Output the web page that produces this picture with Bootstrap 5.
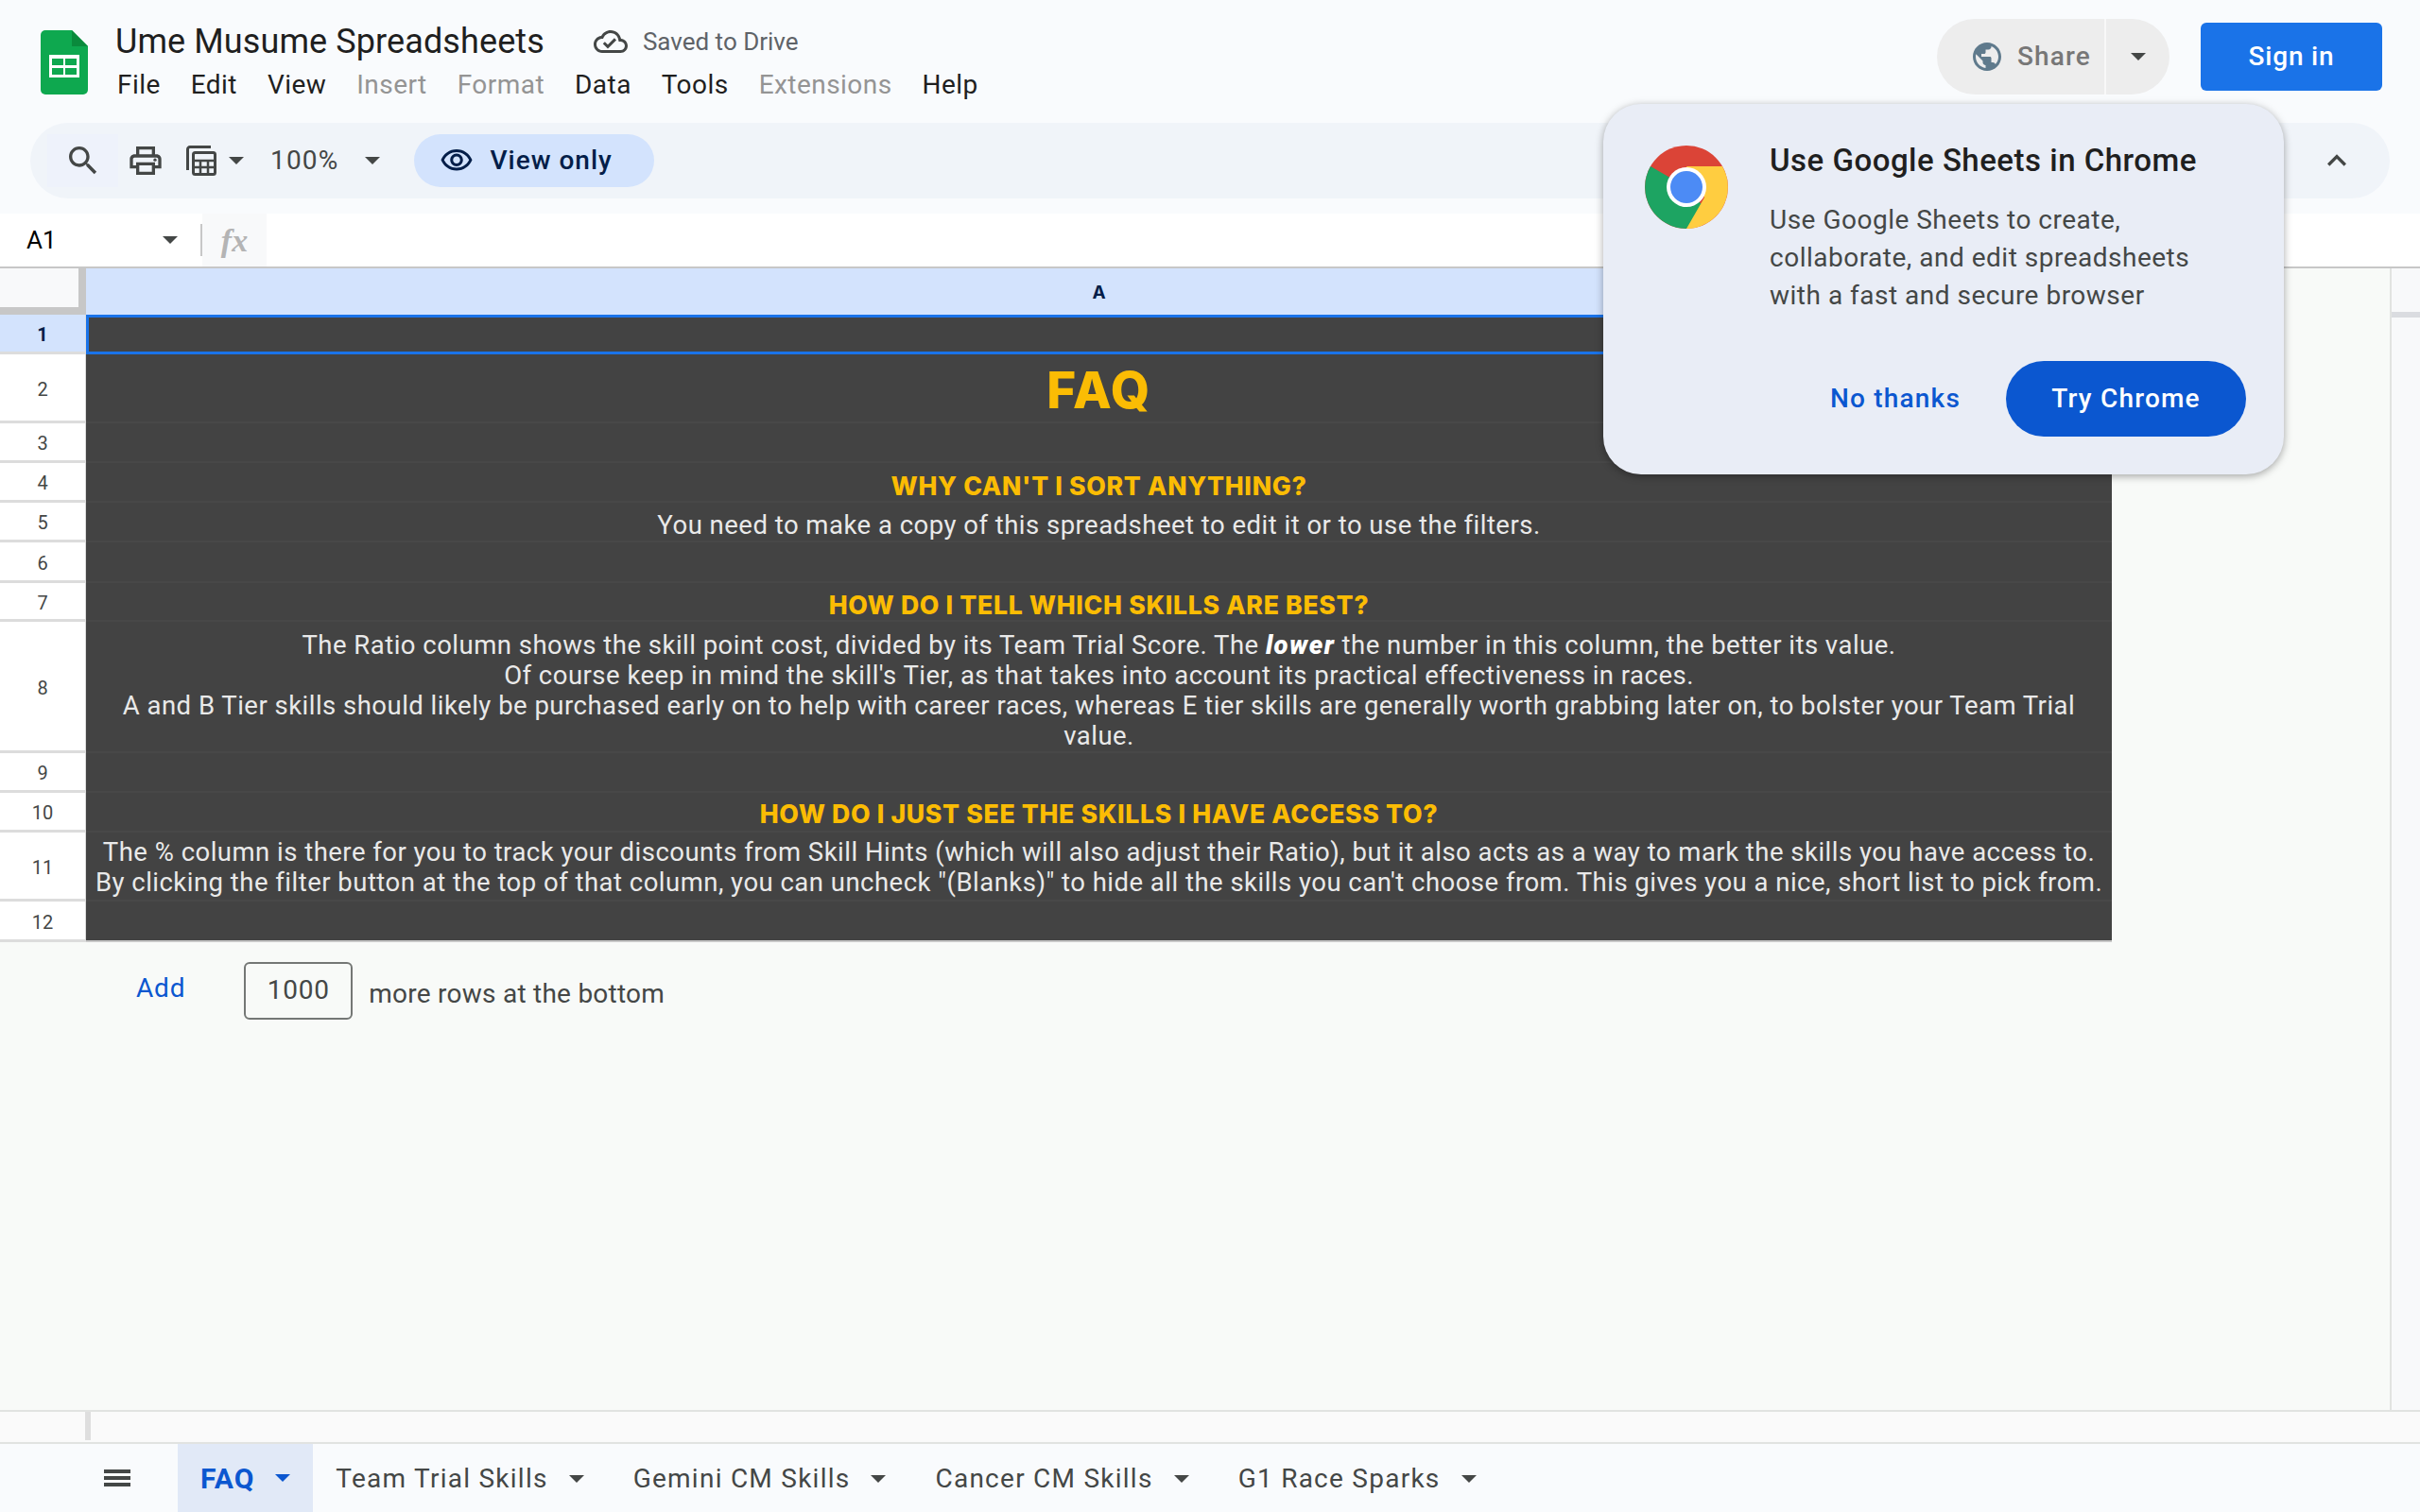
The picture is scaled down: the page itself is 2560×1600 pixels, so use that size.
<!DOCTYPE html>
<html lang="en">
<head>
  <meta charset="UTF-8">
  <title>Ume Musume Spreadsheets</title>
  <link href="https://cdn.jsdelivr.net/npm/bootstrap@5.3.0/dist/css/bootstrap.min.css" rel="stylesheet">
  <style>
    html, body { height: 100%; }
    body {
      font-family: Roboto, "Liberation Sans", sans-serif;
      background-color: #f8faf8;
      color: #444746;
      overflow: hidden;
    }
    .page { height: 1600px; position: relative; }
    .top-area { background-color: #f9fbfd; height: 226px; flex: none; }
    .title-bar { height: 130px; padding-left: 43px; padding-right: 40px; }
    .sheets-logo { width: 50px; height: 68px; margin-top: 32px; flex: none; }
    .doc-block { margin-left: 29px; padding-top: 21px; }
    .doc-title { font-size: 36px; line-height: 46px; color: #1f1f1f; letter-spacing: .1px; }
    .saved-box { margin-left: 52px; font-size: 26px; color: #5f6368; gap: 16px; }
    .menu-row { gap: 32px; font-size: 28px; line-height: 36px; margin-left: 2px; margin-top: 5px; color: #1f1f1f; letter-spacing: .45px; }
    .menu-off { color: #949494; }
    .share-group { height: 80px; width: 246px; margin-top: 20px; margin-left: auto; background-color: #ededed; border-radius: 40px; color: #777; font-size: 28px; font-weight: 500; letter-spacing: 1.1px; }
    .share-main { width: 179px; padding-left: 35px; gap: 14px; border-right: 2px solid #f8f8f8; height: 100%; }
    .share-drop { flex: 1; }
    .signin-btn { width: 192px; height: 72px; margin-top: 24px; margin-left: 33px; background-color: #1a73e8; border: 0; border-radius: 6px; color: #fff; font-size: 28px; font-weight: 500; letter-spacing: .8px; }
    .tool-bar { height: 80px; margin: 0 32px 0 32px; background-color: #f0f4f9; border-radius: 40px; padding-left: 18px; padding-right: 36px; }
    .tool-hover { width: 75px; height: 56px; background-color: #eef2fb; }
    .print-icon { margin-left: 9px; }
    .calc-icon { margin-left: 23px; }
    .calc-tri { margin-left: 13px; }
    .zoom-text { font-size: 28px; color: #444746; letter-spacing: 1.2px; margin-left: 28px; }
    .zoom-tri { margin-left: 27px; }
    .view-pill { width: 254px; height: 56px; margin-left: 36px; background-color: #d3e3fd; border-radius: 28px; color: #041e49; font-size: 28px; font-weight: 500; padding-left: 27px; gap: 18px; letter-spacing: 1px; }
    .tri { width: 0; height: 0; border-left: 8px solid transparent; border-right: 8px solid transparent; border-top: 8px solid #444746; display: inline-block; flex: none; }
    .tri-blue { border-top-color: #0b57d0; }
    .formula-bar { height: 58px; background-color: #fff; border-bottom: 2px solid #c7c7c7; flex: none; }
    .name-box { width: 212px; padding-left: 28px; padding-right: 24px; font-size: 26px; color: #000; }
    .fx-sep { width: 2px; height: 34px; background-color: #c7c7c7; flex: none; }
    .fx-box { width: 68px; background-color: #f8f9fa; color: #b4b4b4; font-family: "Liberation Serif", serif; font-style: italic; font-weight: 700; font-size: 34px; }
    .sheet-wrap { flex: 1; min-height: 0; }
    .sheet-main { width: 2528px; flex: none; }
    .corner-box { width: 91px; height: 49px; background-color: #f8f9fa; border-right: 8px solid #c7c7c7; border-bottom: 8px solid #c7c7c7; flex: none; }
    .col-a { width: 2143px; height: 49px; background-color: #d3e3fd; color: #041e49; font-family: Inter, Roboto, sans-serif; font-weight: 700; font-size: 19px; padding-top: 4px; }
    .row-num { width: 91px; padding-top: 3px; background-color: #fff; border-bottom: 3px solid #dcdcdc; border-right: 1px solid #dcdcdc; font-size: 20px; color: #444746; flex: none; }
    .row-num-on { background-color: #d3e3fd; color: #041e49; font-weight: 700; }
    .sheet-cell { width: 2143px; background-color: #434343; border-bottom: 2px solid #484848; color: #e9e9e9; font-size: 27.5px; line-height: 32px; text-align: center; padding: 0 4px; letter-spacing: .48px; }
    .sheet-cell b { font-weight: 900; letter-spacing: 1.4px; color: #fff; }
    .cell-head { color: #fbbc04; font-family: Inter, Roboto, sans-serif; font-weight: 800; font-size: 26.67px; letter-spacing: .65px; }
    .cell-big { color: #fbbc04; font-family: Inter, Roboto, sans-serif; font-weight: 800; font-size: 53px; line-height: 70px; padding-top: 3px; letter-spacing: 1.5px; }
    .cell-lift { padding-bottom: 2px; }
    .cell-pick { border: solid #1a73e8; border-width: 3px 0 3px 3px; height: 42px; }
    .cell-end { border-bottom: 2px solid #c7c7c7; }
    .add-rows { padding-left: 144px; padding-top: 21px; font-size: 28px; letter-spacing: .25px; }
    .add-link { color: #0b57d0; margin-top: 7px; letter-spacing: .8px; }
    .add-input { width: 115px; height: 61px; margin-left: 62px; padding-bottom: 2px; border: 2px solid #747775; border-radius: 6px; letter-spacing: .8px; }
    .add-label { margin-left: 17px; margin-top: 13px; }
    .v-scroll { flex: 1; background-color: #f8f9fa; border-left: 2px solid #e1e3e1; height: 100%; }
    .v-thumb { height: 6px; margin-top: 46px; background-color: #dadce0; }
    .h-scroll { height: 36px; flex: none; background-color: #fafafa; border-top: 2px solid #e1e3e1; border-bottom: 2px solid #e1e3e1; padding-left: 90px; }
    .h-mark { width: 6px; height: 30px; background-color: #dedede; }
    .tab-bar { height: 72px; flex: none; background-color: #f9fbfd; font-size: 28px; padding-left: 110px; letter-spacing: 1.25px; }
    .tab-menu { width: 28px; margin-right: 50px; height: 18px; border-top: 4px solid #444746; border-bottom: 4px solid #444746; position: relative; }
    .tab-menu::after { content: ""; position: absolute; left: 0; right: 0; top: 3px; height: 4px; background-color: #444746; }
    .tab-item { gap: 22px; padding: 1px 26px 0; height: 100%; }
    .tab-on { background-color: #e1e9f7; color: #0b57d0; font-weight: 700; font-size: 30px; letter-spacing: 1px; padding: 0 24px 0; margin-right: -2px; }
    .chrome-pop { position: absolute; left: 1696px; top: 110px; width: 720px; height: 392px; background-color: #e9edf6; border-radius: 40px; box-shadow: 0 2px 8px rgba(0,0,0,.35); z-index: 5; padding: 43px 40px 0 43px; }
    .chrome-logo { width: 90px; height: 90px; flex: none; }
    .pop-text { margin-left: 43px; margin-top: -5px; }
    .pop-title { font-size: 33px; line-height: 44px; font-weight: 500; color: #1f1f1f; letter-spacing: .5px; }
    .pop-body { font-size: 28px; line-height: 40px; color: #444746; margin-top: 21px; letter-spacing: .5px; }
    .pop-actions { margin-top: 49px; gap: 48px; }
    .pop-no { color: #0b57d0; font-size: 28px; font-weight: 500; letter-spacing: 1.2px; }
    .pop-try { width: 254px; height: 80px; border: 0; background-color: #0b57d0; color: #fff; border-radius: 40px; font-size: 28px; font-weight: 500; letter-spacing: 1.2px; }
  </style>
</head>
<body>
<div class="page d-flex flex-column">

  <div class="top-area">
    <div class="title-bar d-flex">
      <svg class="sheets-logo" viewBox="0 0 50 68">
        <path d="M5 0h28l17 17v46a5 5 0 0 1-5 5H5a5 5 0 0 1-5-5V5a5 5 0 0 1 5-5z" fill="#0ea84f"/>
        <path d="M33 0l17 17H33z" fill="#0a8a3c"/>
        <path d="M9 26h32v24H9z" fill="#fff"/>
        <path d="M12 30h12v7H12zM26 30h12v7H26zM12 40h12v7H12zM26 40h12v7H26z" fill="#0ea84f"/>
      </svg>
      <div class="doc-block">
        <div class="d-flex align-items-center">
          <div class="doc-title">Ume Musume Spreadsheets</div>
          <div class="saved-box d-flex align-items-center">
            <svg width="36" height="36" viewBox="0 0 24 24" fill="#444746"><path d="M19.35 10.04C18.67 6.59 15.64 4 12 4 9.11 4 6.6 5.64 5.35 8.04 2.34 8.36 0 10.91 0 14c0 3.31 2.69 6 6 6h13c2.76 0 5-2.24 5-5 0-2.64-2.05-4.78-4.65-4.96zM19 18H6c-2.21 0-4-1.79-4-4 0-2.05 1.53-3.76 3.56-3.97l1.07-.11.5-.95C8.08 7.14 9.94 6 12 6c2.62 0 4.88 1.86 5.39 4.43l.3 1.5 1.53.11c1.56.1 2.78 1.41 2.78 2.96 0 1.65-1.35 3-3 3zm-9-3.82l-2.09-2.09L6.5 13.5 10 17l6.01-6.01-1.41-1.41z"/></svg>
            <span>Saved to Drive</span>
          </div>
        </div>
        <div class="menu-row d-flex">
          <span>File</span><span>Edit</span><span>View</span><span class="menu-off">Insert</span><span class="menu-off">Format</span><span>Data</span><span>Tools</span><span class="menu-off">Extensions</span><span>Help</span>
        </div>
      </div>
      <div class="share-group d-flex align-items-center">
        <div class="share-main d-flex align-items-center">
          <svg width="36" height="36" viewBox="0 0 24 24" fill="#5f7a8c"><path d="M12 2C6.48 2 2 6.48 2 12s4.48 10 10 10 10-4.48 10-10S17.52 2 12 2zm-1 17.93c-3.95-.49-7-3.85-7-7.93 0-.62.08-1.21.21-1.79L9 15v1c0 1.1.9 2 2 2v1.93zm6.9-2.54c-.26-.81-1-1.39-1.9-1.39h-1v-3c0-.55-.45-1-1-1H8v-2h2c.55 0 1-.45 1-1V7h2c1.1 0 2-.9 2-2v-.41c2.93 1.19 5 4.06 5 7.41 0 2.08-.8 3.97-2.1 5.39z"/></svg>
          <span>Share</span>
        </div>
        <div class="share-drop d-flex justify-content-center"><span class="tri"></span></div>
      </div>
      <button class="signin-btn">Sign in</button>
    </div>
    <div class="tool-bar d-flex align-items-center">
      <div class="tool-hover d-flex align-items-center justify-content-center">
        <svg width="40" height="40" viewBox="0 0 24 24" fill="#444746"><path d="M15.5 14h-.79l-.28-.27C15.41 12.59 16 11.11 16 9.5 16 5.91 13.09 3 9.5 3S3 5.91 3 9.5 5.91 16 9.5 16c1.61 0 3.09-.59 4.23-1.57l.27.28v.79l5 4.99L20.49 19l-4.99-5zm-6 0C7.01 14 5 11.99 5 9.5S7.01 5 9.5 5 14 7.01 14 9.5 11.99 14 9.5 14z"/></svg>
      </div>
      <svg class="print-icon" width="40" height="40" viewBox="0 0 24 24" fill="#444746"><path d="M19 8h-1V3H6v5H5c-1.66 0-3 1.34-3 3v6h4v4h12v-4h4v-6c0-1.66-1.34-3-3-3zM8 5h8v3H8V5zm8 14H8v-4h8v4zm2-4v-2H6v2H4v-4c0-.55.45-1 1-1h14c.55 0 1 .45 1 1v4h-2z"/><circle cx="18" cy="11.5" r="1"/></svg>
      <svg class="calc-icon" width="32" height="32" viewBox="0 0 32 32" fill="none" stroke="#444746" stroke-width="3">
        <path d="M26 1.500H4A2.500 2.500 0 0 0 1.500 4v22"/>
        <rect x="7.500" y="7.500" width="23" height="23" rx="2"/>
        <path stroke-width="2.500" d="M7.500 16h23M7.500 23h23M15 16v14M23 16v14"/>
      </svg>
      <span class="tri calc-tri"></span>
      <span class="zoom-text">100%</span>
      <span class="tri zoom-tri"></span>
      <div class="view-pill d-flex align-items-center">
        <svg width="36" height="36" viewBox="0 0 24 24" fill="#041e49"><path d="M12 6c3.790 0 7.170 2.130 8.820 5.500C19.170 14.870 15.790 17 12 17s-7.170-2.130-8.820-5.500C4.830 8.130 8.210 6 12 6m0-2C7 4 2.730 7.110 1 11.500 2.730 15.890 7 19 12 19s9.270-3.110 11-7.500C21.270 7.110 17 4 12 4zm0 5c1.380 0 2.500 1.120 2.500 2.500S13.380 14 12 14s-2.500-1.120-2.500-2.500S10.620 9 12 9m0-2c-2.480 0-4.500 2.020-4.500 4.500S9.520 16 12 16s4.500-2.020 4.500-4.500S14.480 7 12 7z"/></svg>
        <span>View only</span>
      </div>
      <svg class="ms-auto" width="40" height="40" viewBox="0 0 24 24" fill="#444746"><path d="M7.410 15.410L12 10.830l4.590 4.580L18 14l-6-6-6 6z"/></svg>
    </div>
  </div>

  <div class="formula-bar d-flex align-items-stretch">
    <div class="name-box d-flex align-items-center justify-content-between"><span>A1</span><span class="tri"></span></div>
    <div class="fx-sep align-self-center"></div>
    <div class="fx-box d-flex align-items-center justify-content-center">fx</div>
  </div>

  <div class="sheet-wrap d-flex">
    <div class="sheet-main">
      <div class="d-flex">
        <div class="corner-box"></div>
        <div class="col-a d-flex align-items-center justify-content-center">A</div>
      </div>
      <div class="d-flex" style="height:42px"><div class="row-num row-num-on d-flex align-items-center justify-content-center">1</div><div class="sheet-cell cell-pick"></div></div>
      <div class="d-flex" style="height:73px"><div class="row-num d-flex align-items-center justify-content-center">2</div><div class="sheet-cell cell-big">FAQ</div></div>
      <div class="d-flex" style="height:42px"><div class="row-num d-flex align-items-center justify-content-center">3</div><div class="sheet-cell"></div></div>
      <div class="d-flex" style="height:42px"><div class="row-num d-flex align-items-center justify-content-center">4</div><div class="sheet-cell cell-head d-flex align-items-end justify-content-center">WHY CAN'T I SORT ANYTHING?</div></div>
      <div class="d-flex" style="height:42px"><div class="row-num d-flex align-items-center justify-content-center">5</div><div class="sheet-cell d-flex align-items-end justify-content-center">You need to make a copy of this spreadsheet to edit it or to use the filters.</div></div>
      <div class="d-flex" style="height:43px"><div class="row-num d-flex align-items-center justify-content-center">6</div><div class="sheet-cell"></div></div>
      <div class="d-flex" style="height:41px"><div class="row-num d-flex align-items-center justify-content-center">7</div><div class="sheet-cell cell-head d-flex align-items-end justify-content-center">HOW DO I TELL WHICH SKILLS ARE BEST?</div></div>
      <div class="d-flex" style="height:139px"><div class="row-num d-flex align-items-center justify-content-center">8</div><div class="sheet-cell d-flex align-items-end justify-content-center"><div>The Ratio column shows the skill point cost, divided by its Team Trial Score. The <b><i>lower</i></b> the number in this column, the better its value.<br>Of course keep in mind the skill's Tier, as that takes into account its practical effectiveness in races.<br>A and B Tier skills should likely be purchased early on to help with career races, whereas E tier skills are generally worth grabbing later on, to bolster your Team Trial value.</div></div></div>
      <div class="d-flex" style="height:42px"><div class="row-num d-flex align-items-center justify-content-center">9</div><div class="sheet-cell"></div></div>
      <div class="d-flex" style="height:42px"><div class="row-num d-flex align-items-center justify-content-center">10</div><div class="sheet-cell cell-head cell-lift d-flex align-items-end justify-content-center">HOW DO I JUST SEE THE SKILLS I HAVE ACCESS TO?</div></div>
      <div class="d-flex" style="height:73px"><div class="row-num d-flex align-items-center justify-content-center">11</div><div class="sheet-cell cell-lift d-flex align-items-end justify-content-center"><div>The % column is there for you to track your discounts from Skill Hints (which will also adjust their Ratio), but it also acts as a way to mark the skills you have access to.<br>By clicking the filter button at the top of that column, you can uncheck "(Blanks)" to hide all the skills you can't choose from. This gives you a nice, short list to pick from.</div></div></div>
      <div class="d-flex" style="height:43px"><div class="row-num d-flex align-items-center justify-content-center">12</div><div class="sheet-cell cell-end"></div></div>
      <div class="add-rows d-flex align-items-start">
        <span class="add-link">Add</span>
        <div class="add-input d-flex align-items-center justify-content-center">1000</div>
        <span class="add-label">more rows at the bottom</span>
      </div>
    </div>
    <div class="v-scroll"><div class="v-thumb"></div></div>
  </div>

  <div class="h-scroll"><div class="h-mark"></div></div>

  <div class="tab-bar d-flex align-items-center">
    <div class="tab-menu"></div>
    <div class="tab-item tab-on d-flex align-items-center"><span>FAQ</span><span class="tri tri-blue"></span></div>
    <div class="tab-item d-flex align-items-center"><span>Team Trial Skills</span><span class="tri"></span></div>
    <div class="tab-item d-flex align-items-center"><span>Gemini CM Skills</span><span class="tri"></span></div>
    <div class="tab-item d-flex align-items-center"><span>Cancer CM Skills</span><span class="tri"></span></div>
    <div class="tab-item d-flex align-items-center"><span>G1 Race Sparks</span><span class="tri"></span></div>
  </div>

  <div class="chrome-pop">
    <div class="d-flex">
      <svg class="chrome-logo" viewBox="0 0 90 90">
        <circle cx="45" cy="45" r="44" fill="#db4437"/>
        <path d="M45 45L7 23A44 44 0 0 0 45 89l19-22z" fill="#1da462"/>
        <path d="M45 23h38A44 44 0 0 1 45 89l19-33z" fill="#ffcd40"/>
        <circle cx="45" cy="45" r="21" fill="#fff"/>
        <circle cx="45" cy="45" r="17" fill="#4c8bf5"/>
      </svg>
      <div class="pop-text flex-grow-1">
        <div class="pop-title">Use Google Sheets in Chrome</div>
        <div class="pop-body">Use Google Sheets to create,<br>collaborate, and edit spreadsheets<br>with a fast and secure browser</div>
      </div>
    </div>
    <div class="pop-actions d-flex align-items-center justify-content-end">
      <span class="pop-no">No thanks</span>
      <button class="pop-try">Try Chrome</button>
    </div>
  </div>

</div>
<script src="https://cdn.jsdelivr.net/npm/bootstrap@5.3.0/dist/js/bootstrap.bundle.min.js"></script>
</body>
</html>
